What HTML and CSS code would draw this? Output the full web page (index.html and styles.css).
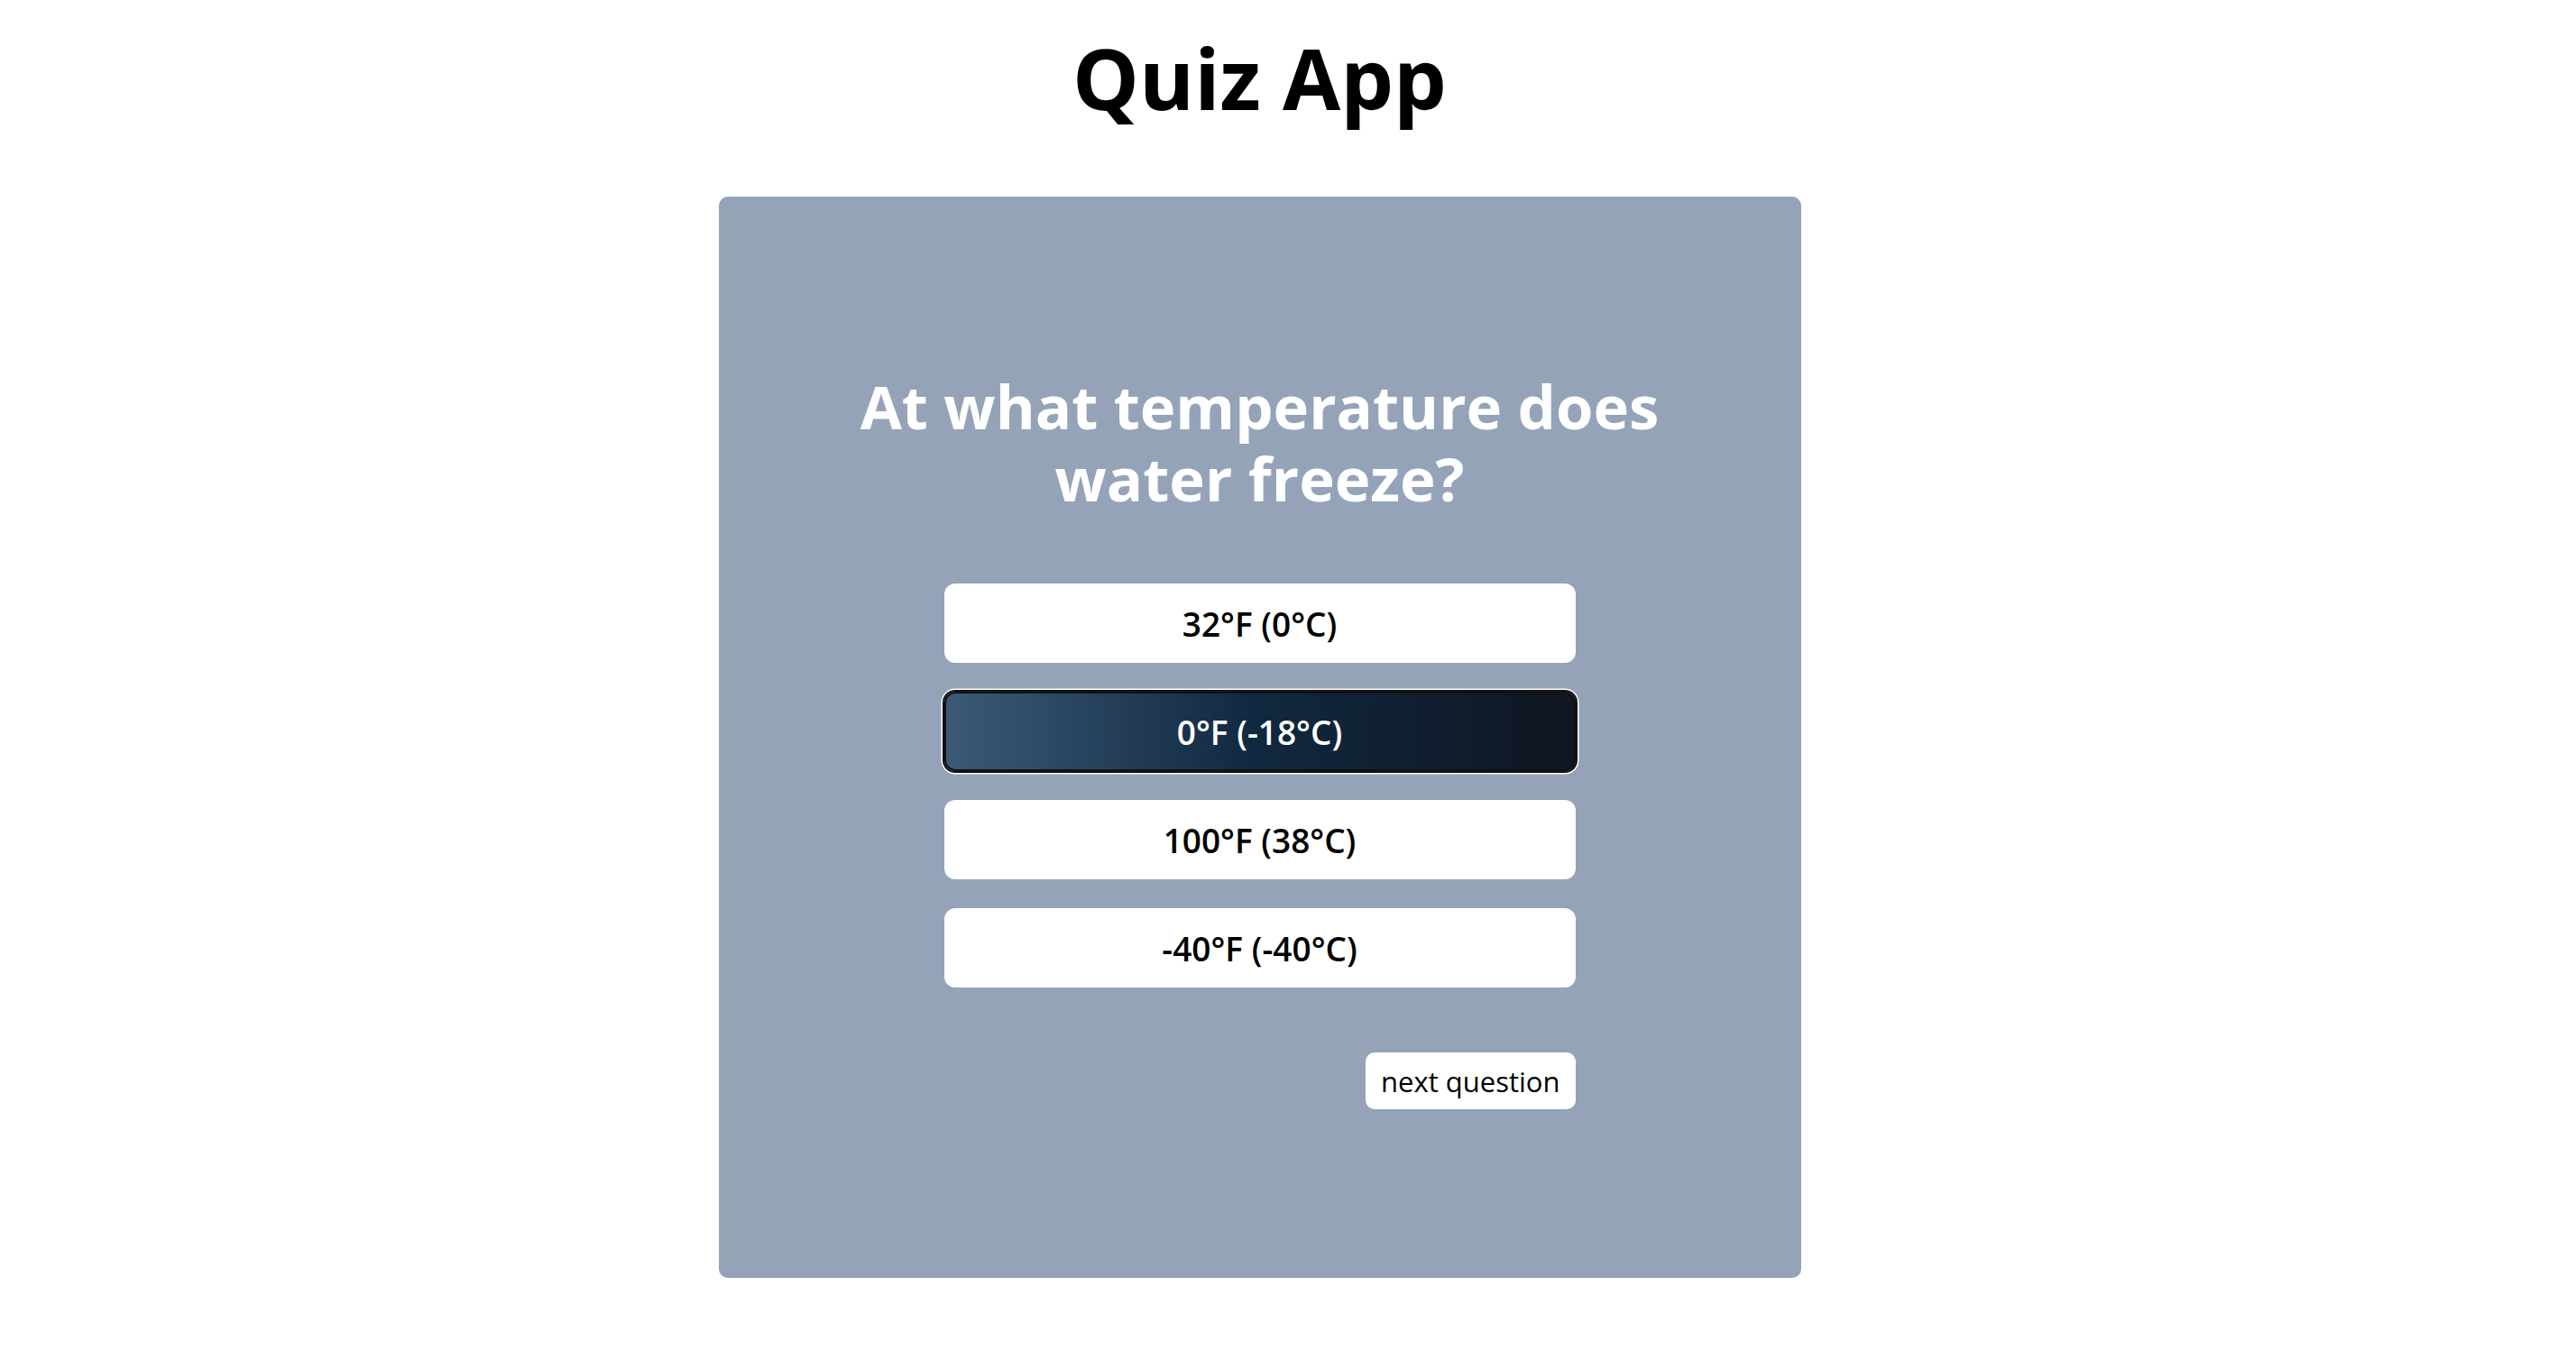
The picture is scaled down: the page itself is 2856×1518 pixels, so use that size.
FILE: index.html
```html
<!DOCTYPE html>
<html lang="en">
<head>
<meta charset="utf-8">
<title>Quiz App</title>
<link rel="stylesheet" href="styles.css">
</head>
<body>
  <main class="page">
    <h1 class="app-title">Quiz App</h1>
    <section class="quiz-card">
      <h2 class="question">At what temperature does water freeze?</h2>
      <div class="answers">
        <button class="answer">32°F (0°C)</button>
        <button class="answer answer--selected">0°F (-18°C)</button>
        <button class="answer">100°F (38°C)</button>
        <button class="answer">-40°F (-40°C)</button>
        <button class="next-btn">next question</button>
      </div>
    </section>
  </main>
</body>
</html>
```

FILE: styles.css
```css
* {
  box-sizing: border-box;
}

html, body {
  margin: 0;
  padding: 0;
  background: #ffffff;
}

.page {
  display: flex;
  flex-direction: column;
  align-items: center;
  padding-right: 63px;
}

.app-title {
  font-family: "Open Sans", "Noto Sans", sans-serif;
  font-weight: 700;
  font-size: 93px;
  line-height: 108px;
  margin: 32px 0 78px;
  color: #000;
}

.quiz-card {
  width: 1200px;
  height: 1199px;
  padding-top: 4px;
  background: #94a3b8;
  border-radius: 10px;
  display: flex;
  flex-direction: column;
  align-items: center;
  justify-content: center;
}

.question {
  font-family: "Open Sans", "Noto Sans", sans-serif;
  font-weight: 700;
  font-size: 67px;
  line-height: 80px;
  color: #ffffff;
  text-align: center;
  max-width: 960px;
  margin: 0 0 77px;
}

.answers {
  width: 700px;
  display: flex;
  flex-direction: column;
  gap: 32px;
}

.answer {
  height: 88px;
  width: 100%;
  border: none;
  border-radius: 12px;
  background: #ffffff;
  color: #000;
  font-family: "Open Sans", "Noto Sans", sans-serif;
  font-weight: 600;
  font-size: 37px;
  padding-top: 2px;
  cursor: pointer;
}

.answer--selected {
  background: linear-gradient(90deg, #3c5976 0%, #10283f 50%, #101521 100%);
  color: #ffffff;
  box-shadow: inset 0 0 0 2px #121212, 0 0 0 2px #121212, 0 0 0 3.5px #ffffff;
}

.next-btn {
  align-self: flex-end;
  margin-top: 40px;
  height: 63px;
  padding: 2px 17px 0;
  border: none;
  border-radius: 10px;
  background: #ffffff;
  color: #000;
  font-family: "Open Sans", "Noto Sans", sans-serif;
  font-weight: 500;
  font-size: 31px;
  cursor: pointer;
}
```
